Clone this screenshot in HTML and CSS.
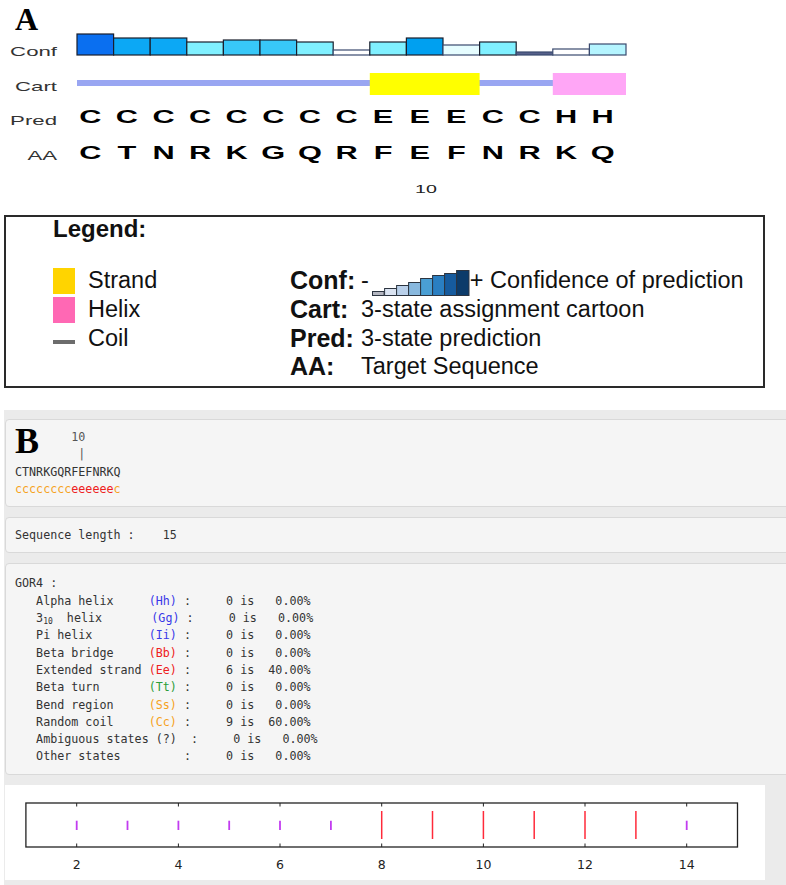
FILE: index.html
```html
<!DOCTYPE html>
<html lang="en">
<head>
<meta charset="utf-8">
<title>Secondary structure prediction</title>
<link rel="stylesheet" href="styles.css">
</head>
<body>
<section class="fig-a">
  <svg class="seq-plot" width="640" height="200" viewBox="0 0 640 200">
    <text class="tag" x="15" y="30">A</text>

    <text class="row-label" transform="translate(57 56) scale(1.71 1)">Conf</text>
    <text class="row-label" transform="translate(57 90.5) scale(1.71 1)">Cart</text>
    <text class="row-label" transform="translate(57 125) scale(1.71 1)">Pred</text>
    <text class="row-label" transform="translate(57 159.5) scale(1.71 1)">AA</text>

    <!-- confidence per residue -->
    <g class="conf">
      <rect class="bar" x="77" y="34" width="36.6" height="21" fill="#0a6ff0"/>
      <rect class="bar" x="113.6" y="38" width="36.6" height="17" fill="#0ca8f5"/>
      <rect class="bar" x="150.2" y="38" width="36.6" height="17" fill="#0ca8f5"/>
      <rect class="bar" x="186.8" y="42" width="36.6" height="13" fill="#80f0ff"/>
      <rect class="bar" x="223.4" y="40" width="36.6" height="15" fill="#38c8f8"/>
      <rect class="bar" x="260" y="40" width="36.6" height="15" fill="#38c8f8"/>
      <rect class="bar" x="296.6" y="42" width="36.6" height="13" fill="#80f0ff"/>
      <rect class="bar thin" x="333.2" y="50" width="36.6" height="5" fill="#ffffff"/>
      <rect class="bar" x="369.8" y="42" width="36.6" height="13" fill="#80f0ff"/>
      <rect class="bar" x="406.4" y="38" width="36.6" height="17" fill="#00a0f0"/>
      <rect class="bar thin" x="443" y="45" width="36.6" height="10" fill="#e6fdff"/>
      <rect class="bar" x="479.6" y="42" width="36.6" height="13" fill="#80f0ff"/>
      <rect class="bar thin" x="516.2" y="52" width="36.6" height="3" fill="#56608a"/>
      <rect class="bar thin" x="552.8" y="49" width="36.6" height="6" fill="#ffffff"/>
      <rect class="bar thin" x="589.4" y="44" width="36.6" height="11" fill="#b5f5ff"/>
    </g>

    <!-- cartoon: coil line, strand and helix blocks -->
    <g class="cart">
      <rect x="77" y="80" width="549" height="6" fill="#99a6f2"/>
      <rect x="369.8" y="73" width="109.8" height="22" fill="#ffff00"/>
      <rect x="552.8" y="73" width="73.2" height="22" fill="#ffa6f6"/>
    </g>

    <g class="residues">
      <text class="residue" transform="translate(90.3 123) scale(1.71 1)">C</text>
      <text class="residue" transform="translate(126.9 123) scale(1.71 1)">C</text>
      <text class="residue" transform="translate(163.5 123) scale(1.71 1)">C</text>
      <text class="residue" transform="translate(200.1 123) scale(1.71 1)">C</text>
      <text class="residue" transform="translate(236.7 123) scale(1.71 1)">C</text>
      <text class="residue" transform="translate(273.3 123) scale(1.71 1)">C</text>
      <text class="residue" transform="translate(309.9 123) scale(1.71 1)">C</text>
      <text class="residue" transform="translate(346.5 123) scale(1.71 1)">C</text>
      <text class="residue" transform="translate(383.1 123) scale(1.71 1)">E</text>
      <text class="residue" transform="translate(419.7 123) scale(1.71 1)">E</text>
      <text class="residue" transform="translate(456.3 123) scale(1.71 1)">E</text>
      <text class="residue" transform="translate(492.9 123) scale(1.71 1)">C</text>
      <text class="residue" transform="translate(529.5 123) scale(1.71 1)">C</text>
      <text class="residue" transform="translate(566.1 123) scale(1.71 1)">H</text>
      <text class="residue" transform="translate(602.7 123) scale(1.71 1)">H</text>

      <text class="residue" transform="translate(90.3 159) scale(1.71 1)">C</text>
      <text class="residue" transform="translate(126.9 159) scale(1.71 1)">T</text>
      <text class="residue" transform="translate(163.5 159) scale(1.71 1)">N</text>
      <text class="residue" transform="translate(200.1 159) scale(1.71 1)">R</text>
      <text class="residue" transform="translate(236.7 159) scale(1.71 1)">K</text>
      <text class="residue" transform="translate(273.3 159) scale(1.71 1)">G</text>
      <text class="residue" transform="translate(309.9 159) scale(1.71 1)">Q</text>
      <text class="residue" transform="translate(346.5 159) scale(1.71 1)">R</text>
      <text class="residue" transform="translate(383.1 159) scale(1.71 1)">F</text>
      <text class="residue" transform="translate(419.7 159) scale(1.71 1)">E</text>
      <text class="residue" transform="translate(456.3 159) scale(1.71 1)">F</text>
      <text class="residue" transform="translate(492.9 159) scale(1.71 1)">N</text>
      <text class="residue" transform="translate(529.5 159) scale(1.71 1)">R</text>
      <text class="residue" transform="translate(566.1 159) scale(1.71 1)">K</text>
      <text class="residue" transform="translate(602.7 159) scale(1.71 1)">Q</text>
    </g>

    <text class="pos" transform="translate(426 193) scale(1.71 1)">10</text>
  </svg>

  <div class="legend">
    <div class="legend-title">Legend:</div>
    <div class="legend-grid">
      <span class="swatch strand"></span>
      <span class="name">Strand</span>
      <span class="key">Conf:</span>
      <span class="value">-<svg class="conf-scale" width="98" height="26" viewBox="0 0 98 26">
          <rect x="0.5" y="21.5" width="11.6" height="4" fill="#b4b6c0"/>
          <rect x="12.6" y="18.5" width="12" height="7" fill="#dbe4f2"/>
          <rect x="24.6" y="15.5" width="12" height="10" fill="#b9d0ea"/>
          <rect x="36.6" y="12.5" width="12" height="13" fill="#88b8de"/>
          <rect x="48.6" y="8.5" width="12" height="17" fill="#4a9fd4"/>
          <rect x="60.6" y="5.5" width="12" height="20" fill="#2a7fc2"/>
          <rect x="72.6" y="3.5" width="12" height="22" fill="#165b9e"/>
          <rect x="84.6" y="0.5" width="12.4" height="25" fill="#0c3b6a"/>
        </svg>+ Confidence of prediction</span>

      <span class="swatch helix"></span>
      <span class="name">Helix</span>
      <span class="key">Cart:</span>
      <span class="value">3-state assignment cartoon</span>

      <span class="swatch coil"></span>
      <span class="name">Coil</span>
      <span class="key">Pred:</span>
      <span class="value">3-state prediction</span>

      <span class="key key-last">AA:</span>
      <span class="value">Target Sequence</span>
    </div>
  </div>
</section>

<section class="fig-b">
  <div class="panel panel-seq">
    <span class="tag-b">B</span>
    <div class="mono">
      <div class="ln">        <span class="ruler">10</span></div>
      <div class="ln">         <span class="ruler">|</span></div>
      <div class="ln">CTNRKGQRFEFNRKQ</div>
      <div class="ln"><span class="ss-c">cccccccc</span><span class="ss-e">eeeeee</span><span class="ss-c">c</span></div>
    </div>
  </div>

  <div class="panel">
    <div class="mono">
      <div class="ln">Sequence length :    15</div>
    </div>
  </div>

  <div class="panel panel-gor">
    <div class="mono">
      <div class="ln">GOR4 :</div>
      <div class="ln">   Alpha helix     <span class="ss-h">(Hh)</span> :     0 is   0.00%</div>
      <div class="ln">   3<sub>10</sub>  helix       <span class="ss-h">(Gg)</span> :     0 is   0.00%</div>
      <div class="ln">   Pi helix        <span class="ss-h">(Ii)</span> :     0 is   0.00%</div>
      <div class="ln">   Beta bridge     <span class="ss-e">(Bb)</span> :     0 is   0.00%</div>
      <div class="ln">   Extended strand <span class="ss-e">(Ee)</span> :     6 is  40.00%</div>
      <div class="ln">   Beta turn       <span class="ss-t">(Tt)</span> :     0 is   0.00%</div>
      <div class="ln">   Bend region     <span class="ss-c">(Ss)</span> :     0 is   0.00%</div>
      <div class="ln">   Random coil     <span class="ss-c">(Cc)</span> :     9 is  60.00%</div>
      <div class="ln">   Ambiguous states (?)  :     0 is   0.00%</div>
      <div class="ln">   Other states         :     0 is   0.00%</div>
    </div>
  </div>

  <div class="plot-wrap">
    <svg class="state-plot" width="760" height="95" viewBox="0 0 760 95">
      <rect class="frame" x="20.9" y="18" width="711.6" height="44"/>
      <g class="ticks">
        <line x1="71.7" y1="18" x2="71.7" y2="21.5"/><line x1="71.7" y1="58.5" x2="71.7" y2="62"/>
        <line x1="173.4" y1="18" x2="173.4" y2="21.5"/><line x1="173.4" y1="58.5" x2="173.4" y2="62"/>
        <line x1="275" y1="18" x2="275" y2="21.5"/><line x1="275" y1="58.5" x2="275" y2="62"/>
        <line x1="376.7" y1="18" x2="376.7" y2="21.5"/><line x1="376.7" y1="58.5" x2="376.7" y2="62"/>
        <line x1="478.4" y1="18" x2="478.4" y2="21.5"/><line x1="478.4" y1="58.5" x2="478.4" y2="62"/>
        <line x1="580" y1="18" x2="580" y2="21.5"/><line x1="580" y1="58.5" x2="580" y2="62"/>
        <line x1="681.7" y1="18" x2="681.7" y2="21.5"/><line x1="681.7" y1="58.5" x2="681.7" y2="62"/>
      </g>
      <g class="coil-marks">
        <line x1="71.7" y1="35.7" x2="71.7" y2="45"/>
        <line x1="122.5" y1="35.7" x2="122.5" y2="45"/>
        <line x1="173.4" y1="35.7" x2="173.4" y2="45"/>
        <line x1="224.2" y1="35.7" x2="224.2" y2="45"/>
        <line x1="275" y1="35.7" x2="275" y2="45"/>
        <line x1="325.9" y1="35.7" x2="325.9" y2="45"/>
        <line x1="681.7" y1="35.7" x2="681.7" y2="45"/>
      </g>
      <g class="strand-marks">
        <line x1="376.7" y1="26" x2="376.7" y2="54"/>
        <line x1="427.5" y1="26" x2="427.5" y2="54"/>
        <line x1="478.4" y1="26" x2="478.4" y2="54"/>
        <line x1="529.2" y1="26" x2="529.2" y2="54"/>
        <line x1="580" y1="26" x2="580" y2="54"/>
        <line x1="630.9" y1="26" x2="630.9" y2="54"/>
      </g>
      <g class="axis-labels">
        <text x="71.7" y="83.5">2</text>
        <text x="173.4" y="83.5">4</text>
        <text x="275" y="83.5">6</text>
        <text x="376.7" y="83.5">8</text>
        <text x="478.4" y="83.5">10</text>
        <text x="580" y="83.5">12</text>
        <text x="681.7" y="83.5">14</text>
      </g>
    </svg>
  </div>
</section>
</body>
</html>
```

FILE: styles.css
```css
* {
  box-sizing: border-box;
}

html,
body {
  margin: 0;
  padding: 0;
  background: #ffffff;
  overflow: hidden;
}

body {
  width: 786px;
  height: 885px;
  font-family: "Liberation Sans", Arial, sans-serif;
  color: #111;
}

/* ---------- sequence plot ---------- */

.seq-plot {
  display: block;
}

.seq-plot .tag {
  font-family: "Liberation Serif", "Times New Roman", serif;
  font-weight: bold;
  font-size: 32px;
  fill: #000;
}

.seq-plot .row-label {
  font-size: 13px;
  fill: #333;
  text-anchor: end;
}

.seq-plot .residue {
  font-size: 18px;
  font-weight: bold;
  fill: #000;
  text-anchor: middle;
}

.seq-plot .pos {
  font-size: 11.5px;
  fill: #222;
  text-anchor: middle;
}

.seq-plot .bar {
  stroke: #1a1e2c;
  stroke-width: 1.2;
}

.seq-plot .bar.thin {
  stroke: #3a4a6e;
}

/* ---------- legend ---------- */

.legend {
  margin: 15px 0 0 4px;
  width: 761px;
  height: 173px;
  border: 2px solid #2a2a2a;
  padding: 0 0 0 47px;
}

.legend-title {
  font-weight: bold;
  font-size: 24px;
  line-height: 24px;
}

.legend-grid {
  margin-top: 25.2px;
  display: grid;
  grid-template-columns: 35px 202px 71px auto;
  grid-auto-rows: 28.7px;
  line-height: 28.7px;
  font-size: 23.5px;
  white-space: nowrap;
}

.swatch {
  display: block;
  width: 22px;
}

.swatch.strand {
  height: 26px;
  margin-top: 2px;
  background: #ffd400;
}

.swatch.helix {
  height: 26px;
  margin-top: 2px;
  background: #ff68b4;
}

.swatch.coil {
  height: 4px;
  margin-top: 16px;
  background: #6c6c6c;
}

.key {
  font-weight: bold;
  font-size: 25px;
}

.key-last {
  grid-column: 3;
}

.conf-scale {
  vertical-align: -8px;
  margin-left: 3px;
}

.conf-scale rect {
  stroke: #2c3440;
  stroke-width: 1;
}

/* ---------- results page ---------- */

.fig-b {
  margin: 22px 0 0 4px;
  padding: 9px 0 5px;
  background: #ebebeb;
  overflow: hidden;
}

.panel {
  position: relative;
  margin: 0 -30px 10px 1px;
  padding: 9px 9px 8px;
  background: #f5f5f5;
  border: 1px solid #d9d9d9;
  border-radius: 4px;
}

.panel-gor {
  padding-top: 11px;
  padding-bottom: 8px;
}

.mono {
  font-family: "DejaVu Sans Mono", "Liberation Mono", monospace;
  font-size: 11.7px;
  line-height: 17.3px;
  color: #333;
}

.mono .ln {
  height: 17.3px;
  white-space: pre;
}

.mono sub {
  font-size: 8px;
  line-height: 0;
  vertical-align: -2px;
}

.tag-b {
  position: absolute;
  left: 9px;
  top: 3px;
  font-family: "Liberation Serif", "Times New Roman", serif;
  font-weight: bold;
  font-size: 36px;
  line-height: 36px;
  color: #000;
}

.ruler {
  color: #555;
}

.ss-h {
  color: #3838e8;
}

.ss-e {
  color: #ee2020;
}

.ss-t {
  color: #2a9d3a;
}

.ss-c {
  color: #f5a21c;
}

.plot-wrap {
  margin-left: 1px;
  width: 760px;
  height: 95px;
  background: #ffffff;
}

.state-plot {
  display: block;
}

.state-plot .frame {
  fill: none;
  stroke: #222;
  stroke-width: 1.3;
}

.state-plot .ticks line {
  stroke: #222;
  stroke-width: 1;
}

.state-plot .coil-marks line {
  stroke: #c23cf0;
  stroke-width: 1.8;
}

.state-plot .strand-marks line {
  stroke: #ff2a3a;
  stroke-width: 1.5;
}

.state-plot .axis-labels text {
  font-family: "DejaVu Sans", sans-serif;
  font-size: 12.5px;
  fill: #222;
  text-anchor: middle;
}
```
